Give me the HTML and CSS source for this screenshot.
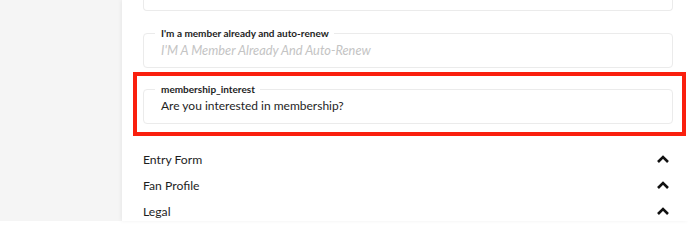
FILE: index.html
```html
<!DOCTYPE html>
<html>
<head>
<meta charset="utf-8">
<link rel="stylesheet" href="styles.css">
</head>
<body>
<div class="page">
  <aside class="sidebar"></aside>
  <main class="main">
    <div class="field-stub"></div>
    <fieldset class="field field-second">
      <legend class="field-label">I'm a member already and auto-renew</legend>
      <div class="field-value placeholder">I'M A Member Already And Auto-Renew</div>
    </fieldset>
    <div class="highlight">
      <fieldset class="field field-inner">
        <legend class="field-label">membership_interest</legend>
        <div class="field-value">Are you interested in membership?</div>
      </fieldset>
    </div>
    <ul class="accordion">
      <li class="acc-item"><span>Entry Form</span>
        <svg class="chev" width="12" height="8" viewBox="0 0 12 8"><polyline points="1,7 6,2 11,7" fill="none" stroke="#111" stroke-width="2.6"/></svg>
      </li>
      <li class="acc-item"><span>Fan Profile</span>
        <svg class="chev" width="12" height="8" viewBox="0 0 12 8"><polyline points="1,7 6,2 11,7" fill="none" stroke="#111" stroke-width="2.6"/></svg>
      </li>
      <li class="acc-item"><span>Legal</span>
        <svg class="chev" width="12" height="8" viewBox="0 0 12 8"><polyline points="1,7 6,2 11,7" fill="none" stroke="#111" stroke-width="2.6"/></svg>
      </li>
    </ul>
  </main>
</div>
</body>
</html>
```
FILE: styles.css
```css
html, body {
  margin: 0;
  padding: 0;
  height: 100%;
  overflow: hidden;
}
body {
  font-family: Lato, "Noto Sans", sans-serif;
  color: #222;
  background: #fff;
}
.page {
  display: flex;
  height: 221px;
}
.sidebar {
  width: 122px;
  flex: none;
  background: #f5f5f5;
}
.main {
  flex: 1;
  background: #fff;
  padding: 0 2px 0 11px;
  box-shadow: -1px 0 4px rgba(0, 0, 0, 0.06);
}
.field-stub {
  height: 10px;
  margin: 0 13px 0 10px;
  border: 1px solid #ebebeb;
  border-top: none;
  border-radius: 0 0 4px 4px;
}
.field {
  margin: 0;
  padding: 0 17px 7px 17px;
  border: 1px solid #ebebeb;
  border-radius: 4px;
  min-width: 0;
}
.field-second {
  margin: 15px 13px 4px 10px;
}
.field-inner {
  margin: 6px 0 8px 0;
}
.field-label {
  margin-left: -6px;
  padding: 0 5px 0 6px;
  font-size: 10px;
  font-weight: 700;
  line-height: 14px;
  height: 14px;
  color: #1e1e1e;
}
.field-value {
  font-size: 12px;
  line-height: 20px;
  height: 20px;
  color: #1e1e1e;
}
.placeholder {
  font-size: 12.8px;
  font-style: italic;
  color: #c4c4c4;
}
.highlight {
  border: 4px solid #fa200e;
  padding: 0 9px 0 6px;
}
.accordion {
  list-style: none;
  margin: 10px 17px 0 10px;
  padding: 0;
}
.acc-item {
  display: flex;
  justify-content: space-between;
  align-items: center;
  height: 26px;
  font-size: 12.2px;
  color: #1e1e1e;
}
.chev {
  display: block;
}
```
